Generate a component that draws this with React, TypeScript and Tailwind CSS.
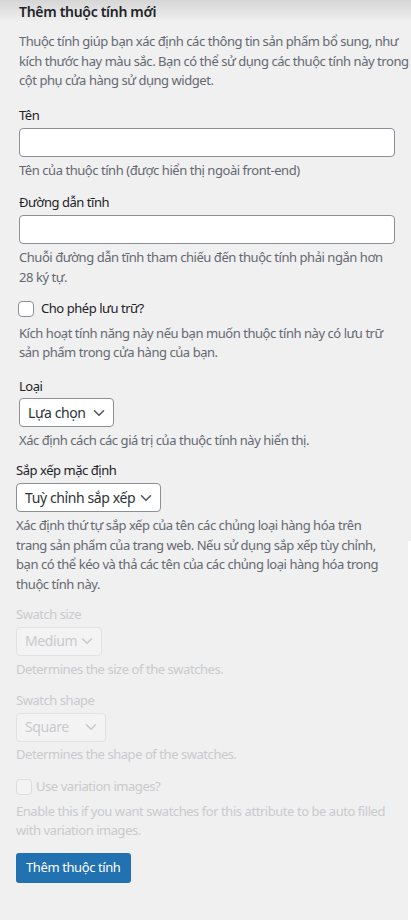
import React from "react";

const font = { fontFamily: '"Noto Sans", "Segoe UI", sans-serif' };

function Chevron({ className = "" }: { className?: string }) {
  return (
    <svg width="12" height="8" viewBox="0 0 12 8" className={className} fill="none">
      <path d="M1.5 1.8 6 6.2 10.5 1.8" stroke="currentColor" strokeWidth="1.6" strokeLinecap="round" strokeLinejoin="round" />
    </svg>
  );
}

function Select({ label, width, disabled }: { label: string; width: string; disabled?: boolean }) {
  return (
    <div
      className={`flex h-[29px] items-center justify-between whitespace-nowrap rounded-[4px] border pl-[8px] pr-[8px] text-[14px] tracking-[-0.4px] ${width} ${
        disabled ? "border-[#e2e2e4] bg-[#f3f3f4] text-[#c9cacc]" : "border-[#8c8f94] bg-white text-[#2c3338]"
      }`}
    >
      <span>{label}</span>
      <Chevron className={disabled ? "text-[#c9cacc]" : "text-[#50575e]"} />
    </div>
  );
}

export default function App() {
  return (
    <div
      className="relative min-h-[920px] w-[411px] overflow-hidden bg-[#f0f0f1] text-[13px] leading-[19.5px] tracking-[-0.45px]"
      style={font}
    >
      <div className="pointer-events-none absolute inset-x-0 top-0 h-[22px] bg-gradient-to-b from-[#d6d6d7] to-[#f0f0f1]" />
      <div className="absolute right-0 top-[541px] bottom-0 w-[3px] bg-white" />

      <div className="relative pl-[19px] pt-[2px]">
        <h2 className="text-[14px] font-semibold leading-[20px] tracking-[-0.3px] text-[#1d2327]">Thêm thuộc tính mới</h2>
        <p className="mt-[10px] w-[400px] text-[#646970]">
          Thuộc tính giúp bạn xác định các thông tin sản phẩm bổ sung, như kích thước hay màu sắc. Bạn có thể sử dụng các thuộc tính này trong cột phụ cửa hàng sử dụng widget.
        </p>

        <div className="mt-[15px]">
          <div className="text-[#1d2327]">Tên</div>
          <div className="mt-[3px] h-[29px] w-[376px] rounded-[4px] border border-[#8c8f94] bg-white" />
          <p className="mt-[4px] text-[#646970]">Tên của thuộc tính (được hiển thị ngoài front-end)</p>
        </div>

        <div className="mt-[12px]">
          <div className="text-[#1d2327]">Đường dẫn tĩnh</div>
          <div className="mt-[3px] h-[29px] w-[376px] rounded-[4px] border border-[#8c8f94] bg-white" />
          <p className="mt-[4px] w-[378px] text-[#646970]">Chuỗi đường dẫn tĩnh tham chiếu đến thuộc tính phải ngắn hơn 28 ký tự.</p>
        </div>

        <div className="mt-[12px]">
          <div className="flex items-center gap-[7px]">
            <div className="-ml-px h-[16px] w-[16px] rounded-[4px] border border-[#8c8f94] bg-white" />
            <span className="text-[#1d2327]">Cho phép lưu trữ?</span>
          </div>
          <p className="mt-[5px] w-[378px] text-[#646970]">Kích hoạt tính năng này nếu bạn muốn thuộc tính này có lưu trữ sản phẩm trong cửa hàng của bạn.</p>
        </div>

        <div className="mt-[14px]">
          <div className="text-[#1d2327]">Loại</div>
          <div className="mt-[2px]">
            <Select label="Lựa chọn" width="w-[95px]" />
          </div>
          <p className="mt-[4px] text-[#646970]">Xác định cách các giá trị của thuộc tính này hiển thị.</p>
        </div>
      </div>

      <div className="relative pl-[16px] pr-[14px]">
        <div className="mt-[10px]">
          <div className="text-[#1d2327]">Sắp xếp mặc định</div>
          <div className="mt-[3px]">
            <Select label="Tuỳ chỉnh sắp xếp" width="w-[145px]" />
          </div>
          <p className="mt-[4px] w-[374px] text-[#646970]">
            Xác định thứ tự sắp xếp của tên các chủng loại hàng hóa trên trang sản phẩm của trang web. Nếu sử dụng sắp xếp tùy chỉnh, bạn có thể kéo và thả các tên của các chủng loại hàng hóa trong thuộc tính này.
          </p>
        </div>

        <div className="mt-[11px] text-[#c9cacc]">
          <div>Swatch size</div>
          <div className="mt-[2px]">
            <Select label="Medium" width="w-[86px]" disabled />
          </div>
          <p className="mt-[4px]">Determines the size of the swatches.</p>
        </div>

        <div className="mt-[12px] text-[#c9cacc]">
          <div>Swatch shape</div>
          <div className="mt-[2px]">
            <Select label="Square" width="w-[90px]" disabled />
          </div>
          <p className="mt-[3px]">Determines the shape of the swatches.</p>
        </div>

        <div className="mt-[13px] text-[#c9cacc]">
          <div className="flex items-center gap-[4px]">
            <div className="h-[16px] w-[16px] rounded-[4px] border border-[#dcdcde] bg-[#f3f3f4]" />
            <span>Use variation images?</span>
          </div>
          <p className="mt-[5px]">Enable this if you want swatches for this attribute to be auto filled with variation images.</p>
        </div>

        <button className="mt-[12px] h-[30px] rounded-[3px] bg-[#2271b1] px-[10px] text-[13px] tracking-[-0.4px] text-white">Thêm thuộc tính</button>
      </div>
    </div>
  );
}
